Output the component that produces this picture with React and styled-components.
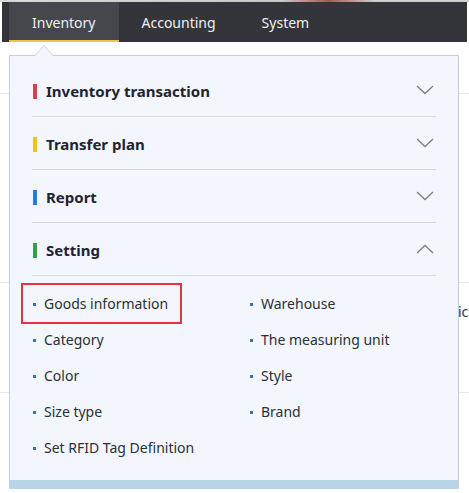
import React from "react";
import styled, { createGlobalStyle } from "styled-components";

const GlobalStyle = createGlobalStyle`
  html, body {
    margin: 0;
    padding: 0;
    background: #fff;
    overflow: hidden;
  }
  body {
    font-family: "Noto Sans", "Open Sans", sans-serif;
  }
`;

const Page = styled.div`
  position: relative;
  width: 469px;
  height: 493px;
  overflow: hidden;
  background: #fff;
`;

const TopStrip = styled.div`
  height: 2px;
  background: linear-gradient(90deg, #d8d8d8 0%, #c9c9c9 60%, #a85a55 70%, #cfcfcf 80%);
`;

const NavBar = styled.nav`
  display: flex;
  height: 40px;
  margin: 0 2px;
  padding-left: 7px;
  background: #33353a;
`;

const Tab = styled.div`
  display: flex;
  align-items: center;
  padding: 2px 23px 0;
  font-size: 14px;
  color: #f0f0f0;
  background: ${(p) => (p.active ? "#45474c" : "transparent")};
  border-bottom: 2px solid ${(p) => (p.active ? "#e9c548" : "transparent")};
`;

const Backdrop = styled.div`
  display: flex;
  flex-direction: column;
`;

const BackRow = styled.div`
  height: ${(p) => p.h}px;
  border-bottom: 1px solid #e6e6e6;
`;

const BackText = styled.span`
  position: absolute;
  left: 458px;
  top: 302px;
  font-size: 14px;
  color: #333;
`;

const Dropdown = styled.div`
  position: absolute;
  left: 9px;
  top: 55px;
  width: 448px;
  background: #f3f7fd;
  border: 1px solid #c9ced6;
  border-bottom: none;
  &::before,
  &::after {
    content: "";
    position: absolute;
    left: 24px;
    width: 0;
    height: 0;
    border-left: 10px solid transparent;
    border-right: 10px solid transparent;
  }
  &::before {
    top: -11px;
    border-bottom: 11px solid #c9ced6;
  }
  &::after {
    top: -10px;
    border-bottom: 11px solid #f3f7fd;
  }
`;

const Body = styled.div`
  padding: 8px 22px 0 22px;
`;

const Section = styled.div`
  display: flex;
  align-items: center;
  height: 52px;
  border-bottom: 1px solid #d5dbe3;
`;

const Marker = styled.span`
  width: 4px;
  height: 15px;
  margin: 2px 9px 0 1px;
  background: ${(p) => p.color};
`;

const Title = styled.span`
  flex: 1;
  padding-top: 2px;
  font-size: 15px;
  font-weight: 700;
  color: #1f2430;
`;

const Chevron = styled.svg`
  width: 18px;
  height: 10px;
  margin-right: 2px;
  fill: none;
  stroke: #7a7d82;
  stroke-width: 1.3;
`;

const Items = styled.div`
  display: grid;
  grid-template-columns: 217px 1fr;
  padding: 9px 0 15px;
`;

const Item = styled.div`
  position: relative;
  display: flex;
  align-items: center;
  height: 36px;
  padding-left: 1px;
  font-size: 14px;
  color: #2b2f36;
  &::before {
    content: "";
    width: 3px;
    height: 3px;
    margin: 2px 8px 0 0;
    background: #3c6fb8;
  }
  ${(p) =>
    p.highlight &&
    `
    &::after {
      content: "";
      position: absolute;
      left: -11px;
      top: -2px;
      width: 157px;
      height: 37px;
      border: 2px solid #e0353f;
    }
  `}
`;

const BlueBar = styled.div`
  height: 9px;
  background: #b6d6e7;
`;

const sections = [
  { title: "Inventory transaction", color: "#d7404c" },
  { title: "Transfer plan", color: "#f6be16" },
  { title: "Report", color: "#1d7fe2" },
  { title: "Setting", color: "#2aa640", open: true },
];

const items = [
  "Goods information",
  "Warehouse",
  "Category",
  "The measuring unit",
  "Color",
  "Style",
  "Size type",
  "Brand",
  "Set RFID Tag Definition",
];

const App = () => {
  return (
    <Page>
      <GlobalStyle />
      <TopStrip />
      <NavBar>
        <Tab active>Inventory</Tab>
        <Tab>Accounting</Tab>
        <Tab>System</Tab>
      </NavBar>
      <Backdrop>
        <BackRow h={51} />
        <BackRow h={188} />
        <BackRow h={109} />
      </Backdrop>
      <BackText>ic</BackText>
      <Dropdown>
        <Body>
          {sections.map((s) => (
            <Section key={s.title}>
              <Marker color={s.color} />
              <Title>{s.title}</Title>
              <Chevron viewBox="0 0 18 10">
                {s.open ? (
                  <polyline points="1,9 9,1.5 17,9" />
                ) : (
                  <polyline points="1,1 9,8.5 17,1" />
                )}
              </Chevron>
            </Section>
          ))}
          <Items>
            {items.map((it, i) => (
              <Item key={it} highlight={i === 0}>
                {it}
              </Item>
            ))}
          </Items>
        </Body>
        <BlueBar />
      </Dropdown>
    </Page>
  );
};

export default App;
